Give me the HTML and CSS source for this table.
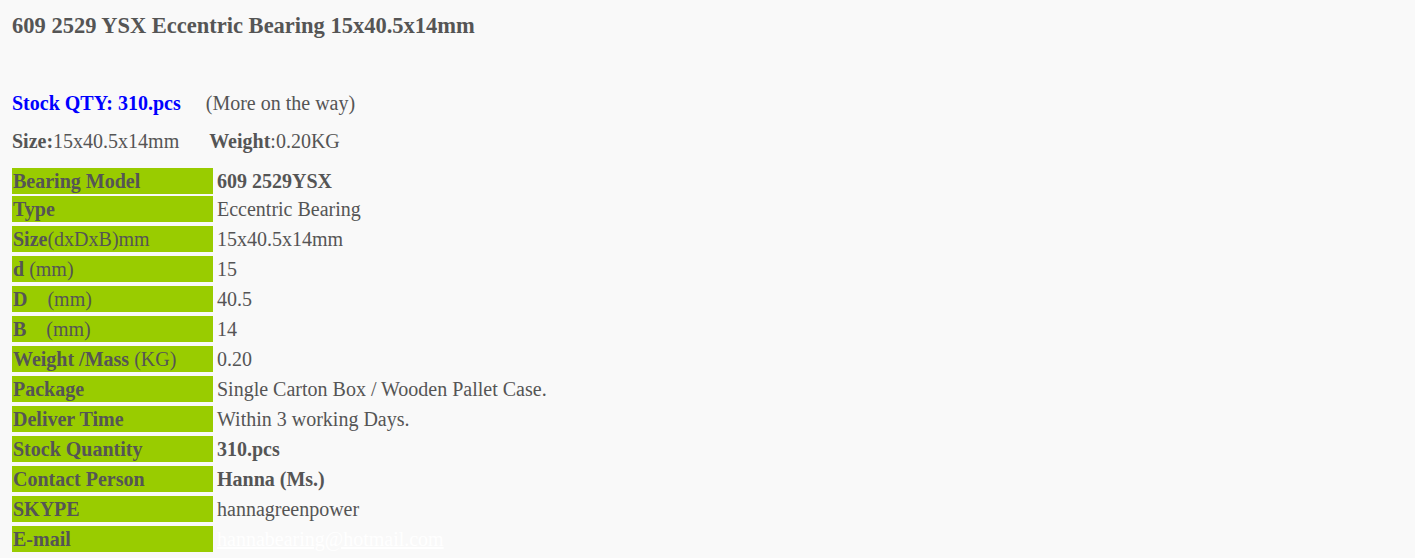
FILE: index.html
```html
<!DOCTYPE html>
<html>
<head>
<meta charset="utf-8">
<link rel="stylesheet" href="styles.css">
</head>
<body>
<div class="page">
  <h1 class="title">609 2529 YSX Eccentric Bearing 15x40.5x14mm</h1>
  <p class="stock"><span class="qty">Stock QTY: 310.pcs</span>&nbsp;&nbsp;&nbsp;&nbsp;&nbsp;(More on the way)</p>
  <p class="size"><b>Size:</b>15x40.5x14mm&nbsp;&nbsp;&nbsp;&nbsp;&nbsp;&nbsp;<b>Weight</b>:0.20KG</p>
  <div class="specs">
    <div class="row tight"><div class="lab"><b>Bearing Model</b></div><div class="val"><b>609 2529YSX</b></div></div>
    <div class="row tight"><div class="lab"><b>Type</b></div><div class="val">Eccentric Bearing</div></div>
    <div class="row"><div class="lab"><b>Size</b>(dxDxB)mm</div><div class="val">15x40.5x14mm</div></div>
    <div class="row"><div class="lab"><b>d</b> (mm)</div><div class="val">15</div></div>
    <div class="row"><div class="lab"><b>D</b>&nbsp;&nbsp;&nbsp; (mm)</div><div class="val">40.5</div></div>
    <div class="row"><div class="lab"><b>B</b>&nbsp;&nbsp;&nbsp; (mm)</div><div class="val">14</div></div>
    <div class="row"><div class="lab"><b>Weight /Mass</b> (KG)</div><div class="val">0.20</div></div>
    <div class="row"><div class="lab"><b>Package</b></div><div class="val">Single Carton Box / Wooden Pallet Case.</div></div>
    <div class="row"><div class="lab"><b>Deliver Time</b></div><div class="val">Within 3 working Days.</div></div>
    <div class="row"><div class="lab"><b>Stock Quantity</b></div><div class="val"><b>310.pcs</b></div></div>
    <div class="row"><div class="lab"><b>Contact Person</b></div><div class="val"><b>Hanna (Ms.)</b></div></div>
    <div class="row"><div class="lab"><b>SKYPE</b></div><div class="val">hannagreenpower</div></div>
    <div class="row"><div class="lab"><b>E-mail</b></div><div class="val"><a class="mail" href="#">hannabearing@hotmail.com</a></div></div>
  </div>
</div>
</body>
</html>
```
FILE: styles.css
```css
html, body {
  margin: 0;
  padding: 0;
  background: #f9f9f9;
}
body {
  font-family: "Liberation Serif", "Times New Roman", serif;
  color: #555555;
  font-size: 20px;
}
.page {
  padding: 0 12px;
}
.title {
  margin: 0;
  padding-top: 13px;
  font-size: 22.5px;
  line-height: 26px;
  font-weight: bold;
}
.stock {
  margin: 0;
  padding-top: 52px;
  line-height: 24px;
}
.qty {
  color: #0000ff;
  font-weight: bold;
}
.size {
  margin: 0;
  padding-top: 14px;
  line-height: 24px;
}
.specs {
  margin-top: 15px;
  display: flex;
  flex-direction: column;
}
.row {
  display: flex;
  height: 26px;
  margin-top: 4px;
  line-height: 27px;
  white-space: nowrap;
}
.row.tight {
  margin-top: 2px;
}
.row:first-child {
  margin-top: 0;
}
.lab {
  width: 201px;
  background: #99cc00;
  padding-left: 1px;
  box-sizing: border-box;
}
.val {
  padding-left: 4px;
}
.mail {
  color: #ffffff;
  text-decoration: underline;
}
```
